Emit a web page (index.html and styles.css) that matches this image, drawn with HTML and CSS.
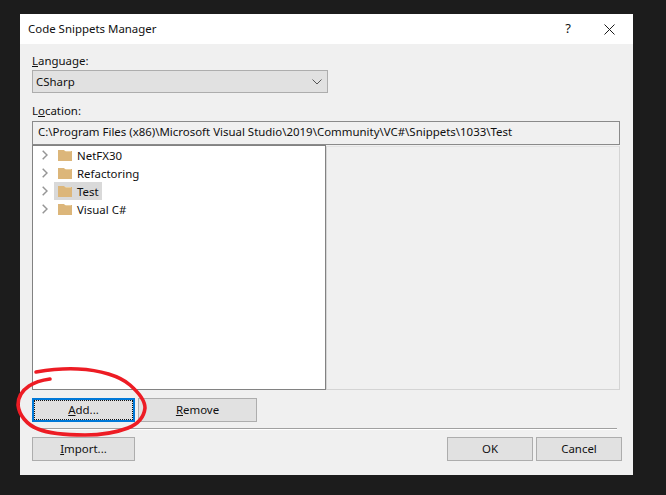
FILE: index.html
```html
<!DOCTYPE html>
<html lang="en">
<head>
<meta charset="utf-8">
<title>Code Snippets Manager</title>
<link rel="stylesheet" href="styles.css">
</head>
<body>
<div class="dialog">
  <header class="titlebar">
    <span class="title">Code Snippets Manager</span>
    <span class="help">?</span>
    <svg class="close" width="11" height="11" viewBox="0 0 11 11"><path d="M.5.5l10 10M10.500.5l-10 10" stroke="#1a1a1a" fill="none"/></svg>
  </header>
  <main class="content">
    <div class="label"><u>L</u>anguage:</div>
    <div class="combo">
      <span>CSharp</span>
      <svg width="10" height="6" viewBox="0 0 10 6"><path d="M.5.500l4.500 4.500 4.500-4.500" stroke="#555" fill="none"/></svg>
    </div>
    <div class="label location-label">L<u>o</u>cation:</div>
    <div class="path">C:\Program Files (x86)\Microsoft Visual Studio\2019\Community\VC#\Snippets\1033\Test</div>
    <div class="panes">
      <div class="tree">
        <div class="node"><svg class="chev" width="6" height="10" viewBox="0 0 6 10"><path d="M.7.700l4.300 4.300-4.300 4.300" stroke="#969696" stroke-width="1.500" fill="none"/></svg><svg class="folder" width="14" height="12" viewBox="0 0 14 12"><path d="M0 1h6l1 1h7v10H0z" fill="#dcb67a"/><path d="M1 3h6l1-1h5v1z" fill="#e9cf9f"/></svg><span class="name">NetFX30</span></div>
        <div class="node"><svg class="chev" width="6" height="10" viewBox="0 0 6 10"><path d="M.7.700l4.300 4.300-4.300 4.300" stroke="#969696" stroke-width="1.500" fill="none"/></svg><svg class="folder" width="14" height="12" viewBox="0 0 14 12"><path d="M0 1h6l1 1h7v10H0z" fill="#dcb67a"/><path d="M1 3h6l1-1h5v1z" fill="#e9cf9f"/></svg><span class="name">Refactoring</span></div>
        <div class="node selected"><svg class="chev" width="6" height="10" viewBox="0 0 6 10"><path d="M.7.700l4.300 4.300-4.300 4.300" stroke="#969696" stroke-width="1.500" fill="none"/></svg><span class="highlight"><svg class="folder" width="14" height="12" viewBox="0 0 14 12"><path d="M0 1h6l1 1h7v10H0z" fill="#dcb67a"/><path d="M1 3h6l1-1h5v1z" fill="#e9cf9f"/></svg><span class="name">Test</span></span></div>
        <div class="node"><svg class="chev" width="6" height="10" viewBox="0 0 6 10"><path d="M.7.700l4.300 4.300-4.300 4.300" stroke="#969696" stroke-width="1.500" fill="none"/></svg><svg class="folder" width="14" height="12" viewBox="0 0 14 12"><path d="M0 1h6l1 1h7v10H0z" fill="#dcb67a"/><path d="M1 3h6l1-1h5v1z" fill="#e9cf9f"/></svg><span class="name">Visual C#</span></div>
      </div>
      <div class="details"></div>
    </div>
    <div class="row actions">
      <button class="btn default"><span class="focus"><u>A</u>dd...</span></button>
      <button class="btn wide"><u>R</u>emove</button>
    </div>
    <div class="rule"></div>
    <div class="row footer">
      <button class="btn"><u>I</u>mport...</button>
      <div class="spacer"></div>
      <button class="btn small">OK</button>
      <button class="btn small">Cancel</button>
    </div>
  </main>
</div>
<svg class="scribble" width="666" height="495" viewBox="0 0 666 495">
  <path d="M36 372C48 370 60 368 78 369C100 370 120 376 130 385C138 392 145 401 145 408C144 417 138 424 128 428C115 433 100 435 85 435C70 435 50 434 38 429C27 425 19 415 18 405C18 397 23 390 29 386C35 382 43 380 50 379" fill="none" stroke="#ed1c24" stroke-width="3.600" stroke-linecap="round" stroke-linejoin="round"/>
</svg>
</body>
</html>
```
FILE: styles.css
```css
* { box-sizing: border-box; }
html, body { margin: 0; height: 100%; }
body {
  background: #1c1c1c;
  padding: 14px 33px 20px 20px;
  font-family: "Noto Sans", "Open Sans", sans-serif;
  font-size: 11.45px;
  color: #111;
  overflow: hidden;
}
.dialog { height: 461px; background: #f0f0f0; display: flex; flex-direction: column; }
.titlebar {
  height: 30px; background: #fff; display: flex; align-items: center;
  padding: 0 18px 2px 8px; flex: none;
}
.title { flex: 1; }
.help { margin-right: 33px; font-size: 13px; }
.close { display: block; margin-top: 2px; }
.content { padding: 9px 11px 0 12px; flex: 1; display: flex; flex-direction: column; }
.label { height: 17px; line-height: 15px; }
.combo {
  width: 296px; height: 23px; background: #e1e1e1; border: 1px solid #adadad;
  display: flex; align-items: center; justify-content: space-between;
  padding: 0 5px 0 3px; margin-bottom: 10px;
}
.location-label { height: 18px; }
.path {
  height: 24px; border: 1px solid #8a8a8a; background: #f0f0f0; line-height: 20px;
  padding-left: 5px; width: 588px; white-space: nowrap; overflow: hidden;
}
.panes { display: flex; height: 245px; width: 588px; }
.tree { width: 294px; background: #fff; border: 1px solid #828282; padding-top: 0; }
.details { flex: 1; margin-top: 1px; border: 1px solid #d4d4d4; border-top-color: #e3e3e3; }
.node { height: 18px; display: flex; align-items: center; padding-left: 9px; }
.chev { margin-right: 10px; flex: none; }
.folder { margin-right: 5px; flex: none; }
.highlight { display: flex; align-items: center; height: 18px; background: #d9d9d9; padding: 0 3px 0 4px; margin-left: -4px; }
.row { display: flex; margin-top: 8px; }
.actions { gap: 3px; }
.btn {
  width: 103px; height: 24px; background: #e1e1e1; border: 1px solid #adadad; padding: 0 0 2px;
  font: inherit; color: inherit;
}
.btn.small { width: 86px; }
.btn.wide { width: 119px; }
.default { border: 2px solid #0078d7; padding: 0; }
.focus {
  display: flex; align-items: center; justify-content: center; height: 100%;
  border: 1px dotted #111; padding-bottom: 2px;
}
.rule { height: 2px; margin: 6px 3px 0 1px; background: #fff; border-top: 1px solid #a0a0a0; width: 584px; }
.footer { gap: 3px; margin-top: 7px; width: 590px; }
.spacer { flex: 1; }
.scribble { position: absolute; left: 0; top: 0; pointer-events: none; }
```
